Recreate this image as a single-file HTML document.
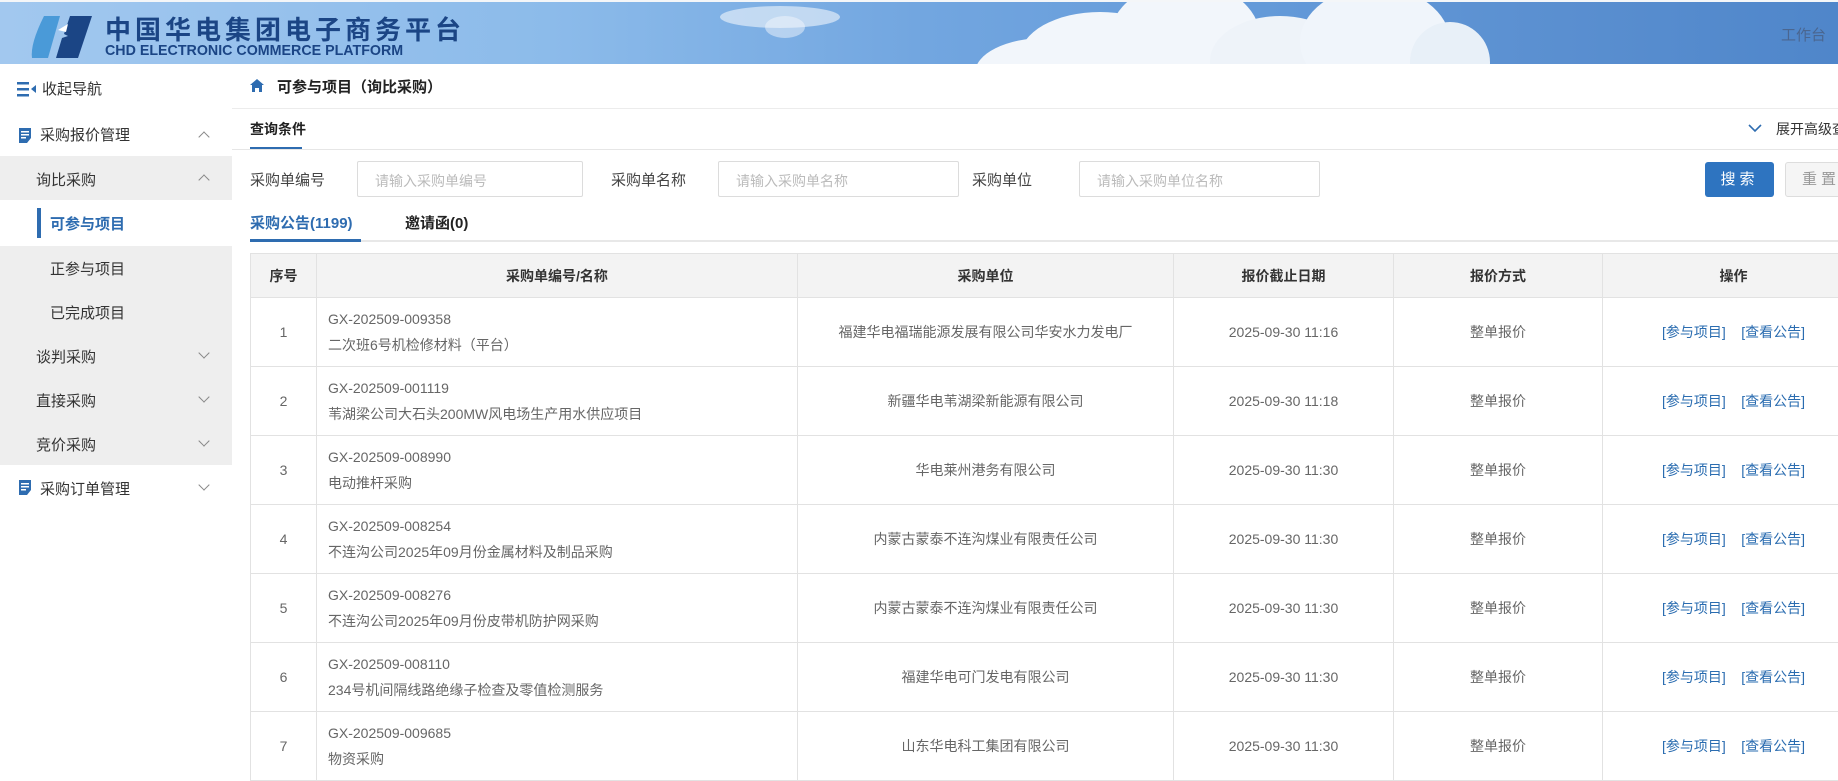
<!DOCTYPE html>
<html><head><meta charset="utf-8">
<style>
*{margin:0;padding:0;box-sizing:border-box}
body{width:1838px;height:744px;overflow:hidden;font-family:"Liberation Sans","Noto Sans CJK SC",sans-serif;background:#fff;position:relative;color:#333}
.hdr{position:absolute;left:0;top:0;width:1838px;height:64px;background:linear-gradient(90deg,#a2c8ef 0%,#8cbbea 30%,#72a6e0 50%,#6399d8 70%,#5a8fd0 85%,#4f86ca 100%);overflow:hidden;border-top:2px solid #f4f6f8}
.cloud{position:absolute;border-radius:50%;background:#f2f6fb}
.t1{position:absolute;left:105px;top:8px;font-size:26px;font-weight:bold;color:#1b4585;letter-spacing:4px}
.t2{position:absolute;left:105px;top:40px;font-size:15px;font-weight:bold;color:#1b4585;transform:scaleX(.95);transform-origin:left}
.side{position:absolute;left:0;top:64px;width:232px;height:680px;background:#fff}
.si{position:absolute;left:0;width:232px;font-size:15px;color:#333}
.arrow{position:absolute;left:200px;width:8px;height:8px;border-left:1.5px solid #888;border-top:1.5px solid #888}
.up{transform:rotate(45deg)}
.dn{transform:rotate(225deg)}
.lbl{position:absolute;font-size:15px;color:#444}
.inp{position:absolute;top:161px;height:36px;border:1px solid #dcdcdc;border-radius:2px;font-size:14px;color:#bbb;padding:9px 0 0 17px}
table{position:absolute;left:250px;top:253px;border-collapse:collapse;font-size:14px;color:#666;table-layout:fixed;width:1614px}
td,th{border:1px solid #e2e2e2;text-align:center}
th{background:#f3f3f3;height:44px;font-weight:bold;color:#333}
td{height:69px}
td.l{text-align:left;padding-left:11px;line-height:26px}
a{color:#2a6cb0;text-decoration:none}
</style></head><body>
<div class="hdr">
 <div class="cloud" style="left:720px;top:4px;width:120px;height:22px;opacity:.6"></div>
 <div class="cloud" style="left:765px;top:14px;width:40px;height:22px;opacity:.5"></div>
 <div class="cloud" style="left:975px;top:36px;width:140px;height:70px"></div>
 <div class="cloud" style="left:1020px;top:10px;width:160px;height:90px"></div>
 <div class="cloud" style="left:1110px;top:-20px;width:150px;height:110px"></div>
 <div class="cloud" style="left:1210px;top:14px;width:140px;height:90px;background:#eef3f9"></div>
 <div class="cloud" style="left:1300px;top:-15px;width:150px;height:110px;background:#f0f5fb"></div>
 <div class="cloud" style="left:1410px;top:20px;width:80px;height:80px;background:#e8f0f8"></div>
 <svg style="position:absolute;left:30px;top:12px" width="70" height="46" viewBox="0 0 70 46">
  <path d="M14 2 L30 2 L18 44 L2 44 Q0 30 14 2Z" fill="#4a9ad8"/>
  <path d="M40 2 L62 2 L48 44 L26 44 L32 24 L38 22 L34 20Z" fill="#1b4585"/>
  <path d="M28 16 L38 10 L36 18Z" fill="#fff"/>
 </svg>
 <div class="t1">中国华电集团电子商务平台</div>
 <div class="t2">CHD ELECTRONIC COMMERCE PLATFORM</div>
 <div style="position:absolute;left:1781px;top:22px;font-size:15px;color:#4a6690">工作台</div>
</div>

<div class="side">
 <div class="si" style="top:10px;height:28px;padding:4px 0 0 42px">
  <svg style="position:absolute;left:17px;top:8px" width="20" height="15"><rect x="0" y="0" width="12" height="2.5" fill="#2e6cb0"/><rect x="0" y="6" width="12" height="2.5" fill="#2e6cb0"/><rect x="0" y="12" width="12" height="2.5" fill="#2e6cb0"/><path d="M19 3 L14 7 L19 11Z" fill="#2e6cb0"/></svg>收起导航</div>
 <div class="si" style="top:56px;height:30px;padding:4px 0 0 40px">
  <svg style="position:absolute;left:19px;top:8px" width="12" height="15"><path d="M0 0H12V10L8 15H0Z" fill="#2e6cb0"/><rect x="2" y="3" width="8" height="1.5" fill="#fff"/><rect x="2" y="6" width="8" height="1.5" fill="#fff"/><rect x="2" y="9" width="5" height="1.5" fill="#fff"/></svg>采购报价管理<span class="arrow up" style="top:13px"></span></div>
 <div style="position:absolute;top:92px;left:0;width:232px;height:309px;background:#eeeeee"></div>
 <div class="si" style="top:92px;height:44px;padding:13px 0 0 36px">询比采购<span class="arrow up" style="top:20px"></span></div>
 <div class="si" style="top:136px;height:46px;background:#fff;padding:13px 0 0 50px;color:#2e6cb0;font-weight:bold"><span style="position:absolute;left:37px;top:8px;width:4px;height:30px;background:#2e6cb0"></span>可参与项目</div>
 <div class="si" style="top:194px;padding:0 0 0 50px">正参与项目</div>
 <div class="si" style="top:238px;padding:0 0 0 50px">已完成项目</div>
 <div class="si" style="top:282px;padding:0 0 0 36px">谈判采购<span class="arrow dn" style="top:3px"></span></div>
 <div class="si" style="top:326px;padding:0 0 0 36px">直接采购<span class="arrow dn" style="top:3px"></span></div>
 <div class="si" style="top:370px;padding:0 0 0 36px">竞价采购<span class="arrow dn" style="top:3px"></span></div>
 <div class="si" style="top:414px;padding:0 0 0 40px"><svg style="position:absolute;left:19px;top:2px" width="12" height="15"><path d="M0 0H12V10L8 15H0Z" fill="#2e6cb0"/><rect x="2" y="3" width="8" height="1.5" fill="#fff"/><rect x="2" y="6" width="8" height="1.5" fill="#fff"/><rect x="2" y="9" width="5" height="1.5" fill="#fff"/></svg>采购订单管理<span class="arrow dn" style="top:3px"></span></div>
</div>

<svg style="position:absolute;left:250px;top:79px" width="14" height="13"><path d="M7 0 L14 6 H12 V13 H9 V9 H5 V13 H2 V6 H0Z" fill="#2e6cb0"/></svg>
<div style="position:absolute;left:277px;top:76px;font-size:15px;font-weight:bold;color:#222">可参与项目（询比采购）</div>
<div style="position:absolute;left:232px;top:108px;width:1606px;height:1px;background:#ececec"></div>
<div style="position:absolute;left:250px;top:119px;font-size:14px;font-weight:bold;color:#222">查询条件</div>
<div style="position:absolute;left:250px;top:147px;width:52px;height:2px;background:#2e6cb0"></div>
<div style="position:absolute;left:232px;top:149px;width:1606px;height:1px;background:#e6e6e6"></div>
<svg style="position:absolute;left:1748px;top:124px" width="14" height="9"><path d="M1 1 L7 7 L13 1" stroke="#2e6cb0" stroke-width="1.6" fill="none"/></svg>
<div style="position:absolute;left:1776px;top:119px;font-size:14px;color:#333;white-space:nowrap">展开高级查询</div>

<div class="lbl" style="left:250px;top:169px">采购单编号</div>
<div class="inp" style="left:357px;width:226px">请输入采购单编号</div>
<div class="lbl" style="left:611px;top:169px">采购单名称</div>
<div class="inp" style="left:718px;width:241px">请输入采购单名称</div>
<div class="lbl" style="left:972px;top:169px">采购单位</div>
<div class="inp" style="left:1079px;width:241px">请输入采购单位名称</div>
<div style="position:absolute;left:1705px;top:162px;width:69px;height:35px;background:#2e74c0;border-radius:3px;color:#fff;font-size:15px;text-align:center;line-height:35px;letter-spacing:4px">搜索</div>
<div style="position:absolute;left:1785px;top:162px;width:69px;height:35px;background:#f5f5f5;border:1px solid #ddd;border-radius:3px;color:#999;font-size:15px;line-height:33px;padding-left:16px;letter-spacing:4px">重置</div>

<div style="position:absolute;left:250px;top:212px;font-size:15px;font-weight:bold;color:#2e6cb0">采购公告(1199)</div>
<div style="position:absolute;left:405px;top:212px;font-size:15px;font-weight:bold;color:#222">邀请函(0)</div>
<div style="position:absolute;left:250px;top:240px;width:1588px;height:2px;background:#e8e8e8"></div>
<div style="position:absolute;left:250px;top:239px;width:111px;height:3px;background:#2e6cb0"></div>

<table>
<colgroup><col style="width:66px"><col style="width:481px"><col style="width:376px"><col style="width:220px"><col style="width:209px"><col style="width:262px"></colgroup>
<tr><th>序号</th><th>采购单编号/名称</th><th>采购单位</th><th>报价截止日期</th><th>报价方式</th><th>操作</th></tr>
<tr><td>1</td><td class="l">GX-202509-009358<br>二次班6号机检修材料（平台）</td><td>福建华电福瑞能源发展有限公司华安水力发电厂</td><td>2025-09-30 11:16</td><td>整单报价</td><td><a>[参与项目]</a>&nbsp;&nbsp;&nbsp;&nbsp;<a>[查看公告]</a></td></tr>
<tr><td>2</td><td class="l">GX-202509-001119<br>苇湖梁公司大石头200MW风电场生产用水供应项目</td><td>新疆华电苇湖梁新能源有限公司</td><td>2025-09-30 11:18</td><td>整单报价</td><td><a>[参与项目]</a>&nbsp;&nbsp;&nbsp;&nbsp;<a>[查看公告]</a></td></tr>
<tr><td>3</td><td class="l">GX-202509-008990<br>电动推杆采购</td><td>华电莱州港务有限公司</td><td>2025-09-30 11:30</td><td>整单报价</td><td><a>[参与项目]</a>&nbsp;&nbsp;&nbsp;&nbsp;<a>[查看公告]</a></td></tr>
<tr><td>4</td><td class="l">GX-202509-008254<br>不连沟公司2025年09月份金属材料及制品采购</td><td>内蒙古蒙泰不连沟煤业有限责任公司</td><td>2025-09-30 11:30</td><td>整单报价</td><td><a>[参与项目]</a>&nbsp;&nbsp;&nbsp;&nbsp;<a>[查看公告]</a></td></tr>
<tr><td>5</td><td class="l">GX-202509-008276<br>不连沟公司2025年09月份皮带机防护网采购</td><td>内蒙古蒙泰不连沟煤业有限责任公司</td><td>2025-09-30 11:30</td><td>整单报价</td><td><a>[参与项目]</a>&nbsp;&nbsp;&nbsp;&nbsp;<a>[查看公告]</a></td></tr>
<tr><td>6</td><td class="l">GX-202509-008110<br>234号机间隔线路绝缘子检查及零值检测服务</td><td>福建华电可门发电有限公司</td><td>2025-09-30 11:30</td><td>整单报价</td><td><a>[参与项目]</a>&nbsp;&nbsp;&nbsp;&nbsp;<a>[查看公告]</a></td></tr>
<tr><td>7</td><td class="l">GX-202509-009685<br>物资采购</td><td>山东华电科工集团有限公司</td><td>2025-09-30 11:30</td><td>整单报价</td><td><a>[参与项目]</a>&nbsp;&nbsp;&nbsp;&nbsp;<a>[查看公告]</a></td></tr>
</table>
</body></html>
